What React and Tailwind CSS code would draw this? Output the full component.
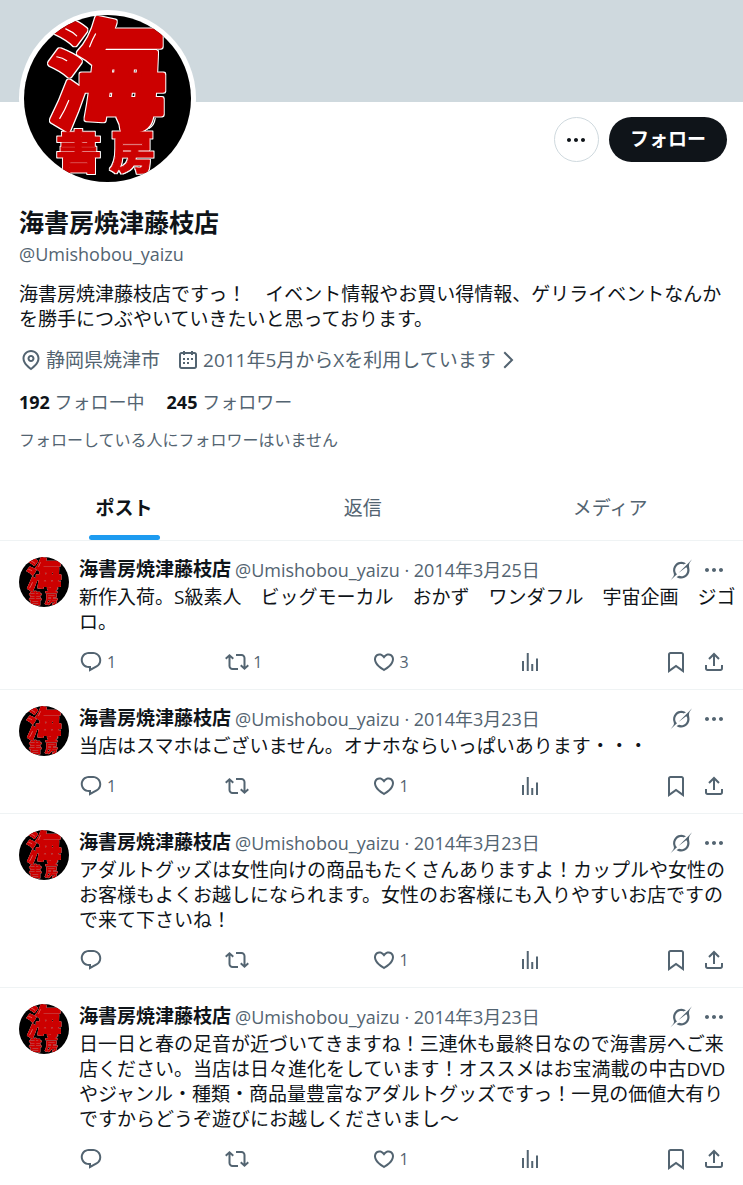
import { useState } from 'react'
import clsx from 'clsx'

const ICONS = {
  reply: 'M1.751 10c0-4.42 3.584-8 8.005-8h4.366c4.49 0 8.129 3.64 8.129 8.13 0 2.96-1.607 5.68-4.196 7.11l-8.054 4.46v-3.69h-.067c-4.49.1-8.183-3.51-8.183-8.01zm8.005-6c-3.317 0-6.005 2.69-6.005 6 0 3.37 2.77 6.08 6.138 6.01l.351-.01h1.761v2.3l5.087-2.81c1.951-1.08 3.163-3.13 3.163-5.36 0-3.39-2.744-6.13-6.129-6.13H9.756z',
  repost: 'M4.5 3.88l4.432 4.14-1.364 1.46L5.5 7.55V16c0 1.1.896 2 2 2H13v2H7.5c-2.209 0-4-1.79-4-4V7.55L1.432 9.48.068 8.02 4.5 3.88zM16.5 6H11V4h5.5c2.209 0 4 1.79 4 4v8.45l2.068-1.93 1.364 1.46-4.432 4.14-4.432-4.14 1.364-1.46 2.068 1.93V8c0-1.1-.896-2-2-2z',
  like: 'M16.697 5.5c-1.222-.06-2.679.51-3.89 2.16l-.805 1.09-.806-1.09C9.984 6.01 8.526 5.44 7.304 5.5c-1.243.07-2.349.78-2.91 1.91-.552 1.12-.633 2.78.479 4.82 1.074 1.97 3.257 4.27 7.129 6.61 3.87-2.34 6.052-4.64 7.126-6.61 1.111-2.04 1.03-3.7.477-4.82-.561-1.13-1.666-1.84-2.908-1.91zm4.187 7.69c-1.351 2.48-4.001 5.12-8.379 7.67l-.503.3-.504-.3c-4.379-2.55-7.029-5.19-8.382-7.67-1.36-2.5-1.41-4.86-.514-6.67.887-1.79 2.647-2.91 4.601-3.01 1.651-.09 3.368.56 4.798 2.01 1.429-1.45 3.146-2.1 4.796-2.01 1.954.1 3.714 1.22 4.601 3.01.896 1.81.846 4.17-.514 6.67z',
  views: 'M8.75 21V3h2v18h-2zM18 21V8.5h2V21h-2zM4 21l.004-10h2L6 21H4zm9.248 0v-7h2v7h-2z',
  bookmark: 'M4 4.5C4 3.12 5.119 2 6.5 2h11C18.881 2 20 3.12 20 4.5v18.44l-8-5.71-8 5.71V4.5zM6.5 4c-.276 0-.5.22-.5.5v14.56l6-4.29 6 4.29V4.5c0-.28-.224-.5-.5-.5h-11z',
  share: 'M12 2.59l5.7 5.7-1.41 1.42L13 6.41V16h-2V6.41l-3.3 3.3-1.41-1.42L12 2.59zM21 15l-.02 3.51c0 1.38-1.12 2.49-2.5 2.49H5.5C4.11 21 3 19.88 3 18.5V15h2v3.5c0 .28.22.5.5.5h12.98c.28 0 .5-.22.5-.5L19 15h2z',
  more: 'M3 12c0-1.1.9-2 2-2s2 .9 2 2-.9 2-2 2-2-.9-2-2zm9 2c1.1 0 2-.9 2-2s-.9-2-2-2-2 .9-2 2 .9 2 2 2zm7 0c1.1 0 2-.9 2-2s-.9-2-2-2-2 .9-2 2 .9 2 2 2z',
  location: 'M12 7c-1.93 0-3.5 1.57-3.5 3.5S10.07 14 12 14s3.5-1.57 3.5-3.5S13.93 7 12 7zm0 5c-.827 0-1.5-.673-1.5-1.5S11.173 9 12 9s1.5.673 1.5 1.5S12.827 12 12 12zm0-10c-4.687 0-8.5 3.813-8.5 8.5 0 5.967 7.621 11.116 7.945 11.332l.555.37.555-.37c.324-.216 7.945-5.365 7.945-11.332C20.5 5.813 16.687 2 12 2zm0 17.77c-1.665-1.241-6.5-5.196-6.5-9.27C5.5 6.916 8.416 4 12 4s6.5 2.916 6.5 6.5c0 4.073-4.835 8.028-6.5 9.27z',
  calendar: 'M7 4V3h2v1h6V3h2v1h1.5C19.89 4 21 5.12 21 6.5v12c0 1.38-1.11 2.5-2.5 2.5h-13C4.12 21 3 19.88 3 18.5v-12C3 5.12 4.12 4 5.5 4H7zm0 2H5.5c-.27 0-.5.22-.5.5v12c0 .28.23.5.5.5h13c.28 0 .5-.22.5-.5v-12c0-.28-.22-.5-.5-.5H17v1h-2V6H9v1H7V6zm0 6h2v-2H7v2zm0 4h2v-2H7v2zm4-4h2v-2h-2v2zm0 4h2v-2h-2v2zm4-4h2v-2h-2v2z',
  chevron: 'M14.586 12L7.543 4.96l1.414-1.42L17.414 12l-8.457 8.46-1.414-1.42L14.586 12z',
  grok: 'M12.745 20.54l10.97-8.19c.539-.4 1.307-.244 1.564.38 1.349 3.288.746 7.241-1.938 9.955-2.683 2.714-6.417 3.31-9.83 1.954l-3.728 1.745c5.347 3.697 11.84 2.782 15.898-1.324 3.219-3.255 4.216-7.692 3.284-11.693l.008.009c-1.351-5.878.332-8.227 3.782-13.031L33 0l-4.54 4.59v-.014L12.743 20.544m-2.263 1.987c-3.837-3.707-3.175-9.446.1-12.755 2.42-2.449 6.388-3.448 9.852-1.979l3.72-1.737c-.67-.49-1.53-1.017-2.515-1.387-4.455-1.854-9.789-.931-13.41 2.728-3.483 3.523-4.579 8.94-2.697 13.561 1.405 3.454-.899 5.898-3.22 8.364C1.49 30.2.666 31.074 0 32l10.478-9.466',
}

const NAME = '海書房焼津藤枝店'
const HANDLE = '@Umishobou_yaizu'

const POSTS = [
  {
    id: 1,
    date: '2014年3月25日',
    lines: ['新作入荷。S級素人　ビッグモーカル　おかず　ワンダフル　宇宙企画　ジゴ', 'ロ。'],
    replies: 1,
    reposts: 1,
    likes: 3,
  },
  {
    id: 2,
    date: '2014年3月23日',
    lines: ['当店はスマホはございません。オナホならいっぱいあります・・・'],
    replies: 1,
    likes: 1,
  },
  {
    id: 3,
    date: '2014年3月23日',
    lines: [
      'アダルトグッズは女性向けの商品もたくさんありますよ！カップルや女性の',
      'お客様もよくお越しになられます。女性のお客様にも入りやすいお店ですの',
      'で来て下さいね！',
    ],
    likes: 1,
  },
  {
    id: 4,
    date: '2014年3月23日',
    lines: [
      '日一日と春の足音が近づいてきますね！三連休も最終日なので海書房へご来',
      '店ください。当店は日々進化をしています！オススメはお宝満載の中古DVD',
      'やジャンル・種類・商品量豊富なアダルトグッズですっ！一見の価値大有り',
      'ですからどうぞ遊びにお越しくださいまし～',
    ],
    likes: 1,
  },
]

const TABS = ['ポスト', '返信', 'メディア']

function Icon({ name, className = 'size-6', viewBox = '0 0 24 24' }) {
  return (
    <svg viewBox={viewBox} className={clsx('shrink-0 fill-current', className)} aria-hidden="true">
      <path d={ICONS[name]} />
    </svg>
  )
}

// Round shop logo: red lettering with a white edge on black
function Logo({ className }) {
  return (
    <svg viewBox="0 0 168 168" className={clsx('block shrink-0 rounded-full bg-black', className)}>
      <filter id="edge" x="-10%" y="-10%" width="120%" height="120%" colorInterpolationFilters="sRGB">
        <feMorphology in="SourceAlpha" operator="dilate" radius="1.5" result="fat" />
        <feFlood floodColor="#fff" />
        <feComposite in2="fat" operator="in" result="white" />
        <feMerge>
          <feMergeNode in="white" />
          <feMergeNode in="SourceGraphic" />
        </feMerge>
      </filter>
      <g
        fill="#cc0000"
        stroke="#cc0000"
        strokeLinejoin="round"
        textAnchor="middle"
        fontWeight="900"
        fontFamily="'Noto Sans CJK JP', sans-serif"
        filter="url(#edge)"
      >
        <text x="83" y="105" fontSize="118" strokeWidth="5">海</text>
        <text x="55" y="155" fontSize="46" strokeWidth="1">書</text>
        <text x="109" y="155" fontSize="46" strokeWidth="1">房</text>
      </g>
      <g fill="none" stroke="#fff" strokeWidth="1.2" strokeLinecap="round">
        <path d="M42 14q7 3 11 7M33 42q6 1 10 4M36 104q5-8 9-18M66 32q3-8 6-13M126 114q5-3 6-10" />
      </g>
    </svg>
  )
}

function Action({ icon, label, count }) {
  return (
    <button aria-label={label} className="flex flex-1 items-center gap-1 hover:text-[#1d9bf0]">
      <Icon name={icon} />
      {count && <span className="text-base leading-6">{count}</span>}
    </button>
  )
}

function Post({ post }) {
  return (
    <article className="flex gap-[10px] border-b border-[#eff3f4] pt-4 pr-[17px] pb-[15px] pl-[19px]">
      <Logo className="size-[50px]" />
      <div className="min-w-0 flex-1">
        <div className="mb-[3px] flex h-[25px] items-center justify-between text-[#536471]">
          <div className="flex items-center gap-1 whitespace-nowrap">
            <a href="#profile" className="text-[19px] font-bold text-[#0f1419]">{NAME}</a>
            <span className="text-lg">{HANDLE} · {post.date}</span>
          </div>
          <div className="flex items-center gap-[10px]">
            <button aria-label="Grok">
              <Icon name="grok" viewBox="0 0 33 32" className="size-[22px]" />
            </button>
            <button aria-label="もっと見る">
              <Icon name="more" />
            </button>
          </div>
        </div>
        <p className="text-[19px] leading-[25px] whitespace-nowrap">
          {post.lines.map(line => (
            <span key={line} className="block">{line}</span>
          ))}
        </p>
        <div className="mt-[15px] flex h-6 items-center text-[#536471]">
          <Action icon="reply" label="返信" count={post.replies} />
          <Action icon="repost" label="リポスト" count={post.reposts} />
          <Action icon="like" label="いいね" count={post.likes} />
          <Action icon="views" label="表示" />
          <div className="flex gap-[14px]">
            <button aria-label="ブックマーク">
              <Icon name="bookmark" />
            </button>
            <button aria-label="共有">
              <Icon name="share" />
            </button>
          </div>
        </div>
      </div>
    </article>
  )
}

export default function App() {
  const [tab, setTab] = useState('ポスト')

  return (
    <main className="min-h-screen overflow-x-hidden bg-white font-['Open_Sans','Noto_Sans_CJK_JP',sans-serif] text-[#0f1419]">
      <div className="h-[102px] bg-[#cfd9de]" />

      {/* Profile */}
      <header className="pr-4 pb-[25px] pl-[19px]">
        <div className="flex items-start justify-between">
          <div className="-mt-[92px] rounded-full bg-white p-[5px]">
            <Logo className="size-[167px]" />
          </div>
          <div className="flex gap-[10px] pt-[15px]">
            <button
              aria-label="もっと見る"
              className="flex size-[45px] items-center justify-center rounded-full border border-[#cfd9de]"
            >
              <Icon name="more" />
            </button>
            <button className="h-[45px] rounded-full bg-[#0f1419] px-[21px] text-[19px] font-bold text-white">
              フォロー
            </button>
          </div>
        </div>

        <h1 className="mt-5 text-[25px] leading-[30px] font-bold">{NAME}</h1>
        <p className="mt-[5px] text-lg leading-6 text-[#536471]">{HANDLE}</p>
        <p className="mt-4 text-[19px] leading-[25px]">
          海書房焼津藤枝店ですっ！　イベント情報やお買い得情報、ゲリライベントなんか
          を勝手につぶやいていきたいと思っております。
        </p>

        <div className="mt-4 flex items-center gap-4 text-[19px] leading-6 text-[#536471]">
          <span className="flex items-center gap-[3px]">
            <Icon name="location" />
            静岡県焼津市
          </span>
          <a href="#about" className="flex items-center">
            <Icon name="calendar" className="mr-[3px] size-6" />
            2011年5月からXを利用しています
            <Icon name="chevron" />
          </a>
        </div>

        <div className="mt-5 flex gap-[22px] text-lg leading-5 text-[#536471]">
          <a href="#following"><b className="text-[#0f1419]">192</b> フォロー中</a>
          <a href="#followers"><b className="text-[#0f1419]">245</b> フォロワー</a>
        </div>
        <p className="mt-[18px] text-base leading-5 text-[#536471]">フォローしている人にフォロワーはいません</p>
      </header>

      {/* Tabs */}
      <nav className="flex h-[66px] border-b border-[#eff3f4] text-[19px] leading-[25px]" role="tablist">
        {TABS.map(name => (
          <button
            key={name}
            role="tab"
            aria-selected={tab === name}
            onClick={() => setTab(name)}
            className={clsx(
              'flex flex-auto justify-center pt-[21px]',
              tab === name ? 'font-bold' : 'text-[#536471]'
            )}
          >
            <span className="flex h-full flex-col justify-between">
              {name}
              {tab === name && <span className="-mx-[7px] h-[5px] rounded-full bg-[#1d9bf0]" />}
            </span>
          </button>
        ))}
      </nav>

      {POSTS.map(post => (
        <Post key={post.id} post={post} />
      ))}
    </main>
  )
}
